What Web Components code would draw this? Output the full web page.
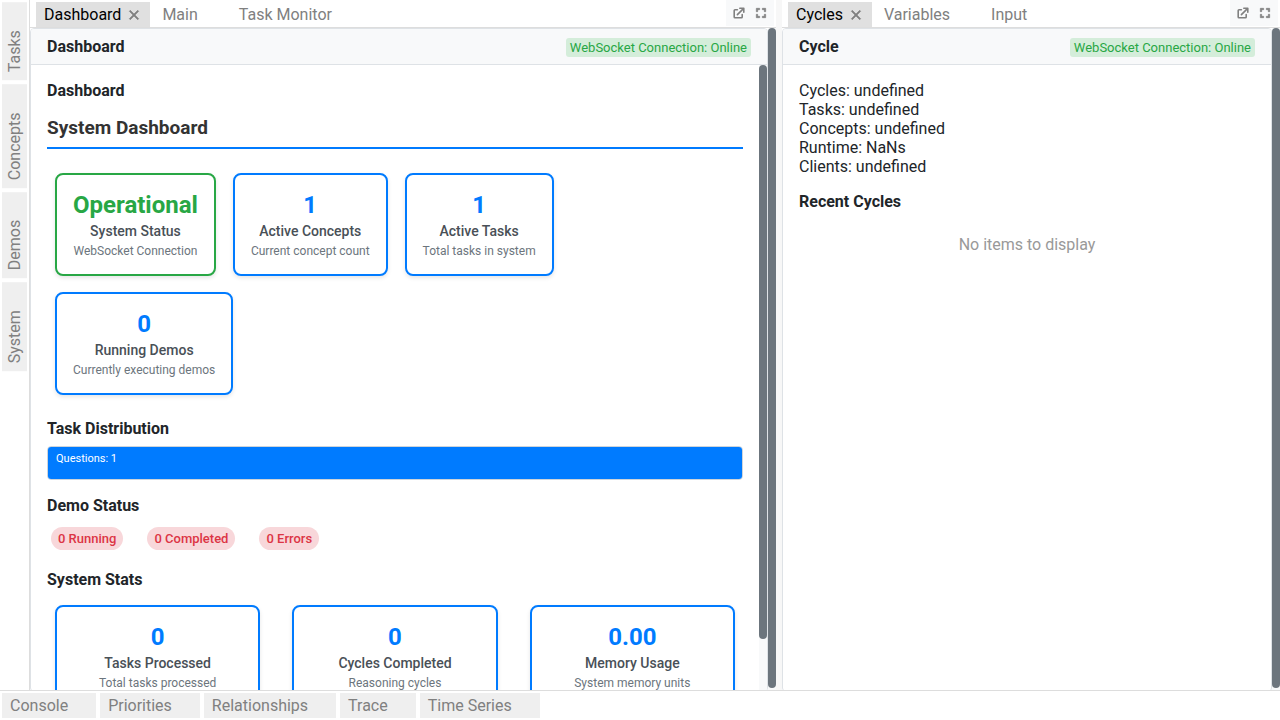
<!DOCTYPE html>
<html lang="en">
<head>
<meta charset="utf-8">
<title>System Dashboard</title>
<style>
  html, body { height: 100%; margin: 0; }
  body {
    font: 16px/19px Roboto, "Liberation Sans", sans-serif;
    color: #212529;
    background: #fff;
    --line: #dee2e6;
    --soft: #f8f9fa;
    --blue: #007bff;
    --green: #28a745;
  }
</style>
</head>
<body>
<dash-app>
  <edge-bar slot="left" side="left">
    <layout-tab kind="edge" label="Tasks"></layout-tab>
    <layout-tab kind="edge" label="Concepts"></layout-tab>
    <layout-tab kind="edge" label="Demos"></layout-tab>
    <layout-tab kind="edge" label="System"></layout-tab>
  </edge-bar>

  <tab-set style="--flex: 0 0 round(down, 60% - 4px, 1px)">
    <layout-tab slot="tabs" label="Dashboard" active></layout-tab>
    <layout-tab slot="tabs" label="Main"></layout-tab>
    <layout-tab slot="tabs" label="Task Monitor"></layout-tab>
    <view-panel heading="Dashboard" status="WebSocket Connection: Online" scrolls>
      <system-dashboard></system-dashboard>
    </view-panel>
  </tab-set>

  <split-handle></split-handle>

  <tab-set style="--flex: 1 1 0">
    <layout-tab slot="tabs" label="Cycles" active></layout-tab>
    <layout-tab slot="tabs" label="Variables"></layout-tab>
    <layout-tab slot="tabs" label="Input"></layout-tab>
    <view-panel heading="Cycle" status="WebSocket Connection: Online">
      <cycle-view></cycle-view>
    </view-panel>
  </tab-set>

  <edge-bar slot="bottom" side="bottom">
    <layout-tab kind="edge" label="Console"></layout-tab>
    <layout-tab kind="edge" label="Priorities"></layout-tab>
    <layout-tab kind="edge" label="Relationships"></layout-tab>
    <layout-tab kind="edge" label="Trace"></layout-tab>
    <layout-tab kind="edge" label="Time Series"></layout-tab>
  </edge-bar>
</dash-app>

<script>
  const define = (name, render) => customElements.define(name, class extends HTMLElement {
    connectedCallback() {
      if (!this.shadowRoot) this.attachShadow({ mode: "open" }).innerHTML = render(this);
    }
  });

  // Page frame: left edge bar, workspace, bottom edge bar
  define("dash-app", () => `
    <style>
      :host { display: flex; flex-direction: column; height: 100vh; overflow: hidden; }
      .upper { flex: 1; display: flex; min-height: 0; }
      main { flex: 1; display: flex; min-width: 0; }
    </style>
    <div class="upper"><slot name="left"></slot><main><slot></slot></main></div>
    <slot name="bottom"></slot>`);

  define("edge-bar", () => `
    <style>
      :host { display: block; flex: none; box-sizing: border-box; }
      nav { display: flex; gap: 4px; padding: 2px; }
      :host([side="bottom"]) { border-top: 1px solid #ddd; }
      :host([side="left"]) { border-right: 1px solid #ddd; }
      /* Rotated half a turn so vertical text reads bottom to top; the reversed order keeps the first tab on top */
      :host([side="left"]) nav {
        writing-mode: vertical-rl; transform: rotate(180deg);
        flex-direction: row-reverse; justify-content: flex-end;
      }
    </style>
    <nav><slot></slot></nav>`);

  define("layout-tab", el => `
    <style>
      :host { display: flex; align-items: center; padding-block: 3px; padding-inline: 8px; gap: 5px; color: #808080; }
      :host([active]) { background: #e0e0e0; color: #000; }
      :host([kind="edge"]) { background: #efefef; gap: 4px; }
      button { margin: 0; padding: 0; border: 0; background: none; font: inherit; color: inherit; white-space: nowrap; cursor: pointer; }
      .close { inline-size: 16px; block-size: 16px; visibility: hidden; }
      :host([active]) .close { visibility: visible; }
      svg { display: block; width: 16px; height: 16px; }
    </style>
    <button type="button">${el.getAttribute("label")}</button>
    <button type="button" class="close" aria-label="Close">
      <svg viewBox="0 0 24 24" fill="gray" stroke="gray"><path d="M19 6.41L17.59 5 12 10.59 6.41 5 5 6.41 10.59 12 5 17.59 6.41 19 12 13.41 17.59 19 19 17.59 13.41 12z"/></svg>
    </button>`);

  define("split-handle", () => `
    <style>:host { display: block; flex: none; width: 6px; background: #f7f7f7; cursor: col-resize; }</style>`);

  define("scroll-track", () => `
    <style>
      :host { display: block; flex: none; width: 8px; background: var(--soft); }
      div { height: var(--thumb); background: #6c757d; border-radius: 4px; }
    </style>
    <div></div>`);

  define("tab-set", () => `
    <style>
      :host { flex: var(--flex); display: flex; flex-direction: column; min-width: 0; }
      header { display: flex; flex: none; border-bottom: 1px solid #ddd; }
      .tabs { flex: 1; display: flex; gap: 4px; padding: 2px 6px 0; }
      .tools { display: flex; align-items: center; gap: 6px; padding: 0 5px; margin: 0 2px 1px 0; background: var(--soft); }
      button { margin: 0; padding: 0; border: 0; background: none; cursor: pointer; }
      svg { display: block; width: 16px; height: 16px; }
      .view { flex: 1; display: flex; min-height: 0; overflow: hidden; }
      scroll-track { --thumb: calc(100% - 2px); }
    </style>
    <header>
      <div class="tabs"><slot name="tabs"></slot></div>
      <div class="tools">
        <button type="button" aria-label="Pop out">
          <svg viewBox="0 0 20 20" fill="gray"><path d="M11 3a1 1 0 100 2h2.586l-6.293 6.293a1 1 0 101.414 1.414L15 6.414V9a1 1 0 102 0V4a1 1 0 00-1-1h-5z"/><path d="M5 5a2 2 0 00-2 2v8a2 2 0 002 2h8a2 2 0 002-2v-3a1 1 0 10-2 0v3H5V7h3a1 1 0 000-2H5z"/></svg>
        </button>
        <button type="button" aria-label="Maximize">
          <svg viewBox="0 0 24 24" fill="gray" stroke="gray"><path d="M7 14H5v5h5v-2H7v-3zm-2-4h2V7h3V5H5v5zm12 7h-3v2h5v-5h-2v3zM14 5v2h3v3h2V5h-5z"/></svg>
        </button>
      </div>
    </header>
    <div class="view"><slot></slot><scroll-track></scroll-track></div>`);

  define("view-panel", el => `
    <style>
      :host {
        flex: 1; display: flex; flex-direction: column; min-width: 0; box-sizing: border-box;
        height: calc(100% + 2px); border: 1px solid var(--line); border-radius: 4px; overflow: hidden; background: #fff;
      }
      header {
        display: flex; align-items: baseline; justify-content: space-between; flex: none;
        padding: 8px 16px; background: var(--soft); border-bottom: 1px solid var(--line);
      }
      h2 { margin: 0; font-size: 16px; font-weight: 700; }
      .status { margin-bottom: -2px; padding: 2px 4px; border-radius: 3px; font-size: 13px; line-height: 15px; color: var(--green); background: #d4edda; }
      .row { flex: 1; display: flex; min-height: 0; }
      .body { flex: 1; min-width: 0; padding: 16px; overflow: hidden; }
      scroll-track { --thumb: calc(100% * 11 / 12); }
    </style>
    <header><h2>${el.getAttribute("heading")}</h2><span class="status">${el.getAttribute("status")}</span></header>
    <div class="row">
      <div class="body"><slot></slot></div>
      ${el.hasAttribute("scrolls") ? "<scroll-track></scroll-track>" : ""}
    </div>`);

  define("stat-card", el => `
    <style>
      :host {
        display: block; padding: 16px; border: 2px solid var(--blue); border-radius: 8px; color: var(--blue);
        background: #fff; box-shadow: 0 2px 4px rgba(0, 0, 0, .1); text-align: center;
      }
      :host([ok]) { border-color: var(--green); color: var(--green); }
      p { margin: 0; }
      .value { font-size: 24px; line-height: 28px; font-weight: 700; }
      .name { margin-top: 4px; font-size: 14px; line-height: 16px; font-weight: 500; color: #495057; }
      .note { margin-top: 5px; font-size: 12px; line-height: 14px; color: #6c757d; }
    </style>
    <p class="value">${el.getAttribute("value")}</p>
    <p class="name">${el.getAttribute("name")}</p>
    <p class="note">${el.getAttribute("note")}</p>`);

  define("system-dashboard", () => `
    <style>
      :host { display: block; }
      h3, h4 { margin: 0; font-size: 16px; font-weight: 700; }
      h4 { margin: 16px 0 8px; }
      .title { margin: 16px 0; padding-bottom: 8px; font-size: 19px; line-height: 23px; color: #333; border-bottom: 2px solid var(--blue); }
      .cards { display: flex; flex-wrap: wrap; gap: 16px 17px; padding: 8px; }
      .stats { display: grid; grid-template-columns: repeat(3, 1fr); gap: 32px; padding: 8px; }
      .bar { height: 32px; border: 1px solid #ced4da; border-radius: 4px; overflow: hidden; }
      .bar div { box-sizing: border-box; height: 100%; padding: 5px 8px; font-size: 11px; line-height: 13px; color: #fff; background: var(--blue); }
      .badges { display: flex; gap: 24px; padding: 4px; }
      .badges span { padding: 4px 7px; border-radius: 12px; font-size: 13px; line-height: 15px; font-weight: 500; color: #dc3545; background: #f8d7da; }
    </style>
    <h3>Dashboard</h3>
    <h3 class="title">System Dashboard</h3>
    <div class="cards">
      <stat-card ok value="Operational" name="System Status" note="WebSocket Connection"></stat-card>
      <stat-card value="1" name="Active Concepts" note="Current concept count"></stat-card>
      <stat-card value="1" name="Active Tasks" note="Total tasks in system"></stat-card>
      <stat-card value="0" name="Running Demos" note="Currently executing demos"></stat-card>
    </div>
    <h4>Task Distribution</h4>
    <div class="bar"><div>Questions: 1</div></div>
    <h4>Demo Status</h4>
    <div class="badges"><span>0 Running</span><span>0 Completed</span><span>0 Errors</span></div>
    <h4>System Stats</h4>
    <div class="stats">
      <stat-card value="0" name="Tasks Processed" note="Total tasks processed"></stat-card>
      <stat-card value="0" name="Cycles Completed" note="Reasoning cycles"></stat-card>
      <stat-card value="0.00" name="Memory Usage" note="System memory units"></stat-card>
    </div>`);

  define("cycle-view", () => `
    <style>
      :host { display: block; }
      p { margin: 0; }
      h3 { margin: 16px 0 0; font-size: 16px; font-weight: 700; }
      .empty { padding: 24px; text-align: center; color: #999; }
    </style>
    <p>Cycles: undefined</p>
    <p>Tasks: undefined</p>
    <p>Concepts: undefined</p>
    <p>Runtime: NaNs</p>
    <p>Clients: undefined</p>
    <h3>Recent Cycles</h3>
    <p class="empty">No items to display</p>`);
</script>
</body>
</html>
